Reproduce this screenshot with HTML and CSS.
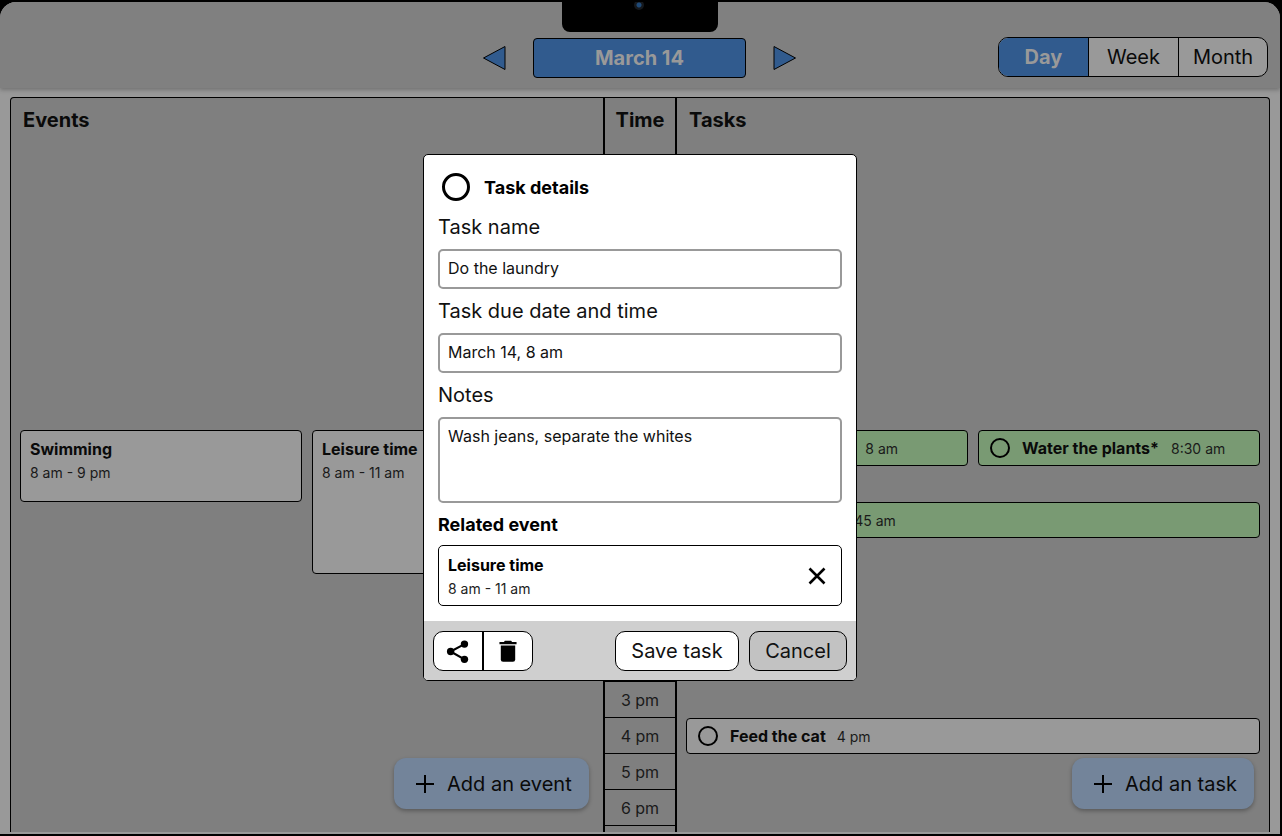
FILE: index.html
```html
<!DOCTYPE html>
<html lang="en">

<head>
    <meta charset="UTF-8">
    <meta name="viewport" content="width=device-width, initial-scale=1.0">
    <title>Planner</title>
    <link rel="stylesheet" href="styles.css">
</head>

<body>
    <div class="screen">
        <header class="topbar">
            <div class="date-nav">
                <svg class="arrow" width="24" height="26" viewBox="0 0 24 26"><path d="M23 1.5V24.5L1.5 13Z" /></svg>
                <div class="date-title">March 14</div>
                <svg class="arrow" width="24" height="26" viewBox="0 0 24 26"><path d="M1 1.5V24.5L22.5 13Z" /></svg>
            </div>
            <div class="view-switch">
                <div class="view-option active">Day</div>
                <div class="view-option">Week</div>
                <div class="view-option">Month</div>
            </div>
        </header>

        <main class="planner">
            <section class="events-col">
                <h2 class="col-title">Events</h2>
                <div class="hour-grid">
                    <div class="card event swimming">
                        <strong>Swimming</strong>
                        <span>8 am - 9 pm</span>
                    </div>
                    <div class="card event leisure">
                        <strong>Leisure time</strong>
                        <span>8 am - 11 am</span>
                    </div>
                </div>
                <button class="add-button">
                    <svg width="22" height="22" viewBox="0 0 22 22"><path d="M11 2V20M2 11H20" /></svg>
                    Add an event
                </button>
            </section>

            <section class="time-col">
                <h2 class="col-title">Time</h2>
                <div class="hours">
                    <div class="hour">12 am</div>
                    <div class="hour">1 am</div>
                    <div class="hour">2 am</div>
                    <div class="hour">3 am</div>
                    <div class="hour">4 am</div>
                    <div class="hour">5 am</div>
                    <div class="hour">6 am</div>
                    <div class="hour">7 am</div>
                    <div class="hour">8 am</div>
                    <div class="hour">9 am</div>
                    <div class="hour">10 am</div>
                    <div class="hour">11 am</div>
                    <div class="hour">12 pm</div>
                    <div class="hour">1 pm</div>
                    <div class="hour">2 pm</div>
                    <div class="hour">3 pm</div>
                    <div class="hour">4 pm</div>
                    <div class="hour">5 pm</div>
                    <div class="hour">6 pm</div>
                </div>
            </section>

            <section class="tasks-col">
                <h2 class="col-title">Tasks</h2>
                <div class="hour-grid">
                    <div class="card task green laundry">
                        <i class="check"></i><strong>Do the laundry*</strong><span>8 am</span>
                    </div>
                    <div class="card task green plants">
                        <i class="check"></i><strong>Water the plants*</strong><span>8:30 am</span>
                    </div>
                    <div class="card task green dishes">
                        <i class="check"></i><strong>Wash dishes</strong><span>9:45 am</span>
                    </div>
                    <div class="card task cat">
                        <i class="check"></i><strong>Feed the cat</strong><span>4 pm</span>
                    </div>
                </div>
                <button class="add-button">
                    <svg width="22" height="22" viewBox="0 0 22 22"><path d="M11 2V20M2 11H20" /></svg>
                    Add an task
                </button>
            </section>
        </main>

        <div class="notch"><i class="camera"></i></div>

        <div class="modal">
            <div class="modal-body">
                <div class="modal-head">
                    <i class="check big"></i>
                    <strong>Task details</strong>
                </div>
                <div class="field-label">Task name</div>
                <div class="field">Do the laundry</div>
                <div class="field-label">Task due date and time</div>
                <div class="field">March 14, 8 am</div>
                <div class="field-label">Notes</div>
                <div class="field notes">Wash jeans, separate the whites</div>
                <div class="related-label">Related event</div>
                <div class="related">
                    <div class="related-text">
                        <strong>Leisure time</strong>
                        <span>8 am - 11 am</span>
                    </div>
                    <svg width="20" height="20" viewBox="0 0 20 20"><path class="close-x" d="M2.5 2.5L17.5 17.5M17.5 2.5L2.5 17.5" /></svg>
                </div>
            </div>
            <div class="modal-foot">
                <div class="icon-group">
                    <div class="icon-btn">
                        <svg width="24" height="25" viewBox="0 0 26 26">
                            <circle cx="20" cy="5" r="4" />
                            <circle cx="5" cy="13" r="4" />
                            <circle cx="20" cy="21.5" r="4" />
                            <path class="share-line" d="M20 5L5 13L20 21.5" />
                        </svg>
                    </div>
                    <div class="icon-btn">
                        <svg width="18" height="22" viewBox="0 0 20 24">
                            <path d="M6.5 0.5H13.5L14.5 2H19.5V4.5H0.5V2H5.5Z" />
                            <path d="M2 6H18V21.5A2.5 2.5 0 0 1 15.5 24H4.5A2.5 2.5 0 0 1 2 21.5Z" />
                        </svg>
                    </div>
                </div>
                <div class="foot-actions">
                    <button class="foot-btn save">Save task</button>
                    <button class="foot-btn cancel">Cancel</button>
                </div>
            </div>
        </div>
    </div>
</body>

</html>
```

FILE: styles.css
```css
* {
    box-sizing: border-box;
}

html,
body {
    margin: 0;
    padding: 0;
    height: 100%;
    background-color: #000;
    overflow: hidden;
}

body {
    font-family: Inter, "Noto Sans", sans-serif;
    color: #000;
}

.screen {
    position: relative;
    width: 1280px;
    height: 832px;
    margin-top: 2px;
    background-color: #999;
    border-radius: 16px 16px 0 0;
    overflow: hidden;
}

.topbar {
    position: relative;
    height: 86px;
    padding: 0 12px 0 482px;
    background-color: #808080;
    box-shadow: 0 2px 4px rgba(0, 0, 0, 0.25);
    display: flex;
    align-items: flex-start;
    justify-content: space-between;
    z-index: 1;
}

.date-nav {
    display: flex;
    align-items: center;
    gap: 27px;
    margin-top: 36px;
}

.arrow path {
    fill: #315b8e;
    stroke: #000;
    stroke-width: 1;
}

.date-title {
    width: 213px;
    height: 40px;
    background-color: #315b8e;
    border: 1px solid #000;
    border-radius: 4px;
    color: #999;
    font-size: 20px;
    font-weight: 700;
    line-height: 38px;
    text-align: center;
}

.view-switch {
    display: flex;
    margin-top: 35px;
    height: 40px;
    border: 1px solid #000;
    border-radius: 10px;
    overflow: hidden;
    background-color: #999;
}

.view-option {
    height: 38px;
    border-left: 1px solid #000;
    font-size: 20px;
    line-height: 38px;
    text-align: center;
    color: #0a0a0a;
}

.view-option:nth-child(1) {
    width: 89px;
    border-left: none;
}

.view-option:nth-child(2) {
    width: 90px;
}

.view-option:nth-child(3) {
    width: 89px;
}

.view-option.active {
    background-color: #315b8e;
    color: #999;
    font-weight: 700;
}

.planner {
    display: grid;
    grid-template-columns: 592px 74px 1fr;
    width: 1260px;
    height: 735px;
    margin: 9px 0 0 10px;
    background-color: #7f7f7f;
    border: 1px solid #000;
    border-bottom: none;
    border-radius: 4px 4px 0 0;
    overflow: hidden;
}

.col-title {
    margin: 0;
    height: 44px;
    padding: 10px 12px 0;
    font-size: 20px;
    font-weight: 700;
    line-height: 24px;
    color: #0a0a0a;
}

.events-col,
.tasks-col {
    position: relative;
}

.time-col {
    border-left: 2px solid #000;
    border-right: 2px solid #000;
}

.time-col .col-title {
    padding: 10px 0 0;
    text-align: center;
}

.hour {
    height: 36px;
    border-bottom: 1px solid #000;
    font-size: 16px;
    line-height: 37px;
    text-align: center;
    color: #1a1a1a;
}

.hour-grid {
    display: grid;
    grid-template-columns: 1fr 1fr;
    grid-auto-rows: 36px;
    column-gap: 10px;
    padding: 0 9px;
}

.card {
    background-color: #999;
    border: 1px solid #000;
    border-radius: 4px;
    font-size: 14px;
    color: #1a1a1a;
}

.card strong {
    font-size: 16px;
    font-weight: 700;
    color: #0a0a0a;
}

.event {
    display: flex;
    flex-direction: column;
    gap: 5px;
    padding: 8px 9px;
}

.swimming {
    grid-column: 1;
    grid-row: 9 / span 2;
}

.leisure {
    grid-column: 2;
    grid-row: 9 / span 4;
}

.task {
    display: flex;
    align-items: center;
    padding: 0 11px;
    height: 36px;
}

.task strong {
    margin: 0 12px 0 12px;
}

.green {
    background-color: #799a73;
}

.laundry {
    grid-column: 1;
    grid-row: 9;
}

.plants {
    grid-column: 2;
    grid-row: 9;
}

.dishes {
    grid-column: 1 / span 2;
    grid-row: 11;
}

.cat {
    grid-column: 1 / span 2;
    grid-row: 17;
}

.cat strong {
    margin-right: 11px;
}

.check {
    flex: none;
    display: block;
    width: 20px;
    height: 20px;
    border: 2px solid #000;
    border-radius: 50%;
}

.check.big {
    width: 28px;
    height: 28px;
    border-width: 3px;
}

.add-button {
    position: absolute;
    top: 660px;
    display: flex;
    align-items: center;
    gap: 11px;
    height: 51px;
    padding: 0 0 0 20px;
    border: none;
    border-radius: 12px;
    background-color: #73849a;
    box-shadow: 0 2px 4px rgba(0, 0, 0, 0.3);
    font-family: inherit;
    font-size: 20px;
    white-space: nowrap;
    color: #0a0a0a;
}

.add-button svg path {
    fill: none;
    stroke: #000;
    stroke-width: 2;
}

.events-col .add-button {
    left: 383px;
    width: 195px;
}

.tasks-col .add-button {
    right: 15px;
    width: 182px;
}

.notch {
    position: absolute;
    top: -2px;
    left: 562px;
    width: 156px;
    height: 32px;
    background-color: #000;
    border-radius: 0 0 8px 8px;
    z-index: 2;
}

.camera {
    position: absolute;
    top: 0;
    left: 72px;
    width: 10px;
    height: 10px;
    border-radius: 50%;
    background: radial-gradient(circle, #1f4a78 0 2px, #15181c 3px);
}

.modal {
    position: absolute;
    top: 152px;
    left: 423px;
    width: 434px;
    height: 527px;
    display: flex;
    flex-direction: column;
    background-color: #fff;
    border: 1px solid #000;
    border-radius: 5px;
    overflow: hidden;
    z-index: 3;
}

.modal-body {
    flex: 1;
    padding: 0 14px;
}

.modal-head {
    display: flex;
    align-items: center;
    gap: 14px;
    height: 60px;
    padding: 3px 0 0 4px;
    font-size: 18px;
}

.modal-head strong {
    margin-top: 2px;
    font-weight: 700;
}

.field-label {
    height: 34px;
    font-size: 20px;
    line-height: 24px;
    color: #111;
}

.field {
    height: 40px;
    margin-bottom: 10px;
    padding: 0 8px;
    border: 2px solid #999;
    border-radius: 5px;
    font-size: 16px;
    line-height: 35px;
    color: #111;
}

.field.notes {
    height: 86px;
    margin-bottom: 12px;
    line-height: 35px;
}

.related-label {
    height: 30px;
    font-size: 18px;
    font-weight: 700;
    line-height: 20px;
}

.related {
    display: flex;
    align-items: center;
    justify-content: space-between;
    height: 61px;
    padding: 0 14px 0 9px;
    border: 1px solid #000;
    border-radius: 5px;
}

.related-text {
    display: flex;
    flex-direction: column;
    gap: 5px;
    font-size: 14px;
    color: #222;
}

.related-text strong {
    font-size: 16px;
    font-weight: 700;
    color: #000;
}

.close-x {
    fill: none;
    stroke: #000;
    stroke-width: 2.6;
}

.modal-foot {
    display: flex;
    align-items: center;
    justify-content: space-between;
    height: 59px;
    padding: 1px 9px 0;
    background-color: #cfcfcf;
}

.icon-group {
    display: flex;
    height: 40px;
    background-color: #fff;
    border: 1px solid #000;
    border-radius: 10px;
    overflow: hidden;
}

.icon-btn {
    display: flex;
    align-items: center;
    justify-content: center;
    width: 48px;
}

.icon-btn + .icon-btn {
    width: 50px;
    border-left: 2px solid #000;
}

.icon-btn svg {
    fill: #000;
}

.share-line {
    fill: none;
    stroke: #000;
    stroke-width: 2.4;
}

.foot-actions {
    display: flex;
    gap: 10px;
}

.foot-btn {
    height: 40px;
    border: 1px solid #000;
    border-radius: 10px;
    font-family: inherit;
    font-size: 20px;
    color: #111;
}

.save {
    width: 124px;
    background-color: #fff;
}

.cancel {
    width: 98px;
    background-color: #c2c2c2;
}
```
